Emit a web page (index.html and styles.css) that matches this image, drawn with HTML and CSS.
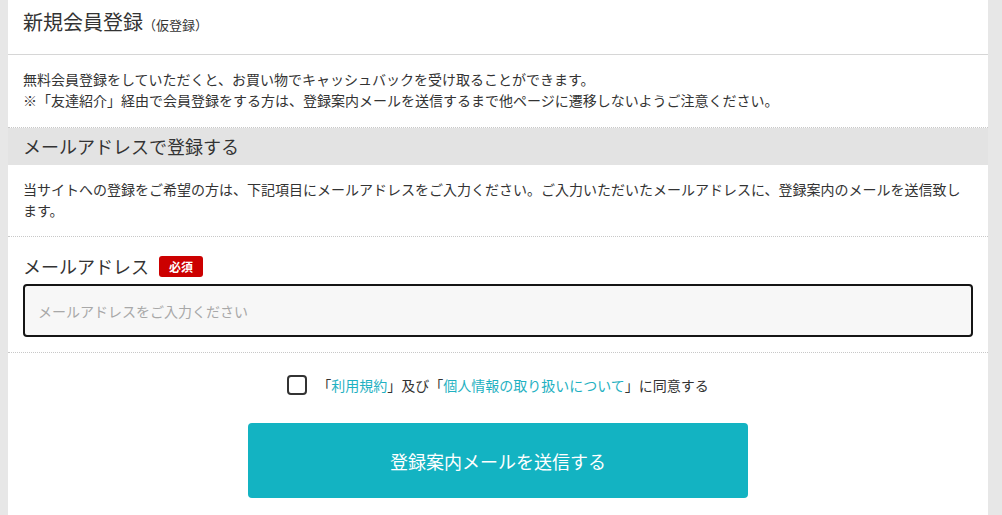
FILE: index.html
```html
<!DOCTYPE html>
<html lang="ja">
<head>
<meta charset="utf-8">
<title>新規会員登録</title>
<link rel="stylesheet" href="styles.css">
</head>
<body>
<main class="panel">
  <header class="page-head">
    <h1 class="page-title">新規会員登録<small class="page-sub">（仮登録）</small></h1>
  </header>
  <section class="intro">
    <p>無料会員登録をしていただくと、お買い物でキャッシュバックを受け取ることができます。</p>
    <p>※「友達紹介」経由で会員登録をする方は、登録案内メールを送信するまで他ページに遷移しないようご注意ください。</p>
  </section>
  <h2 class="band">メールアドレスで登録する</h2>
  <section class="desc">
    <p>当サイトへの登録をご希望の方は、下記項目にメールアドレスをご入力ください。ご入力いただいたメールアドレスに、登録案内のメールを送信致します。</p>
  </section>
  <section class="field">
    <div class="field-label">
      <span class="label-text">メールアドレス</span>
      <span class="badge">必須</span>
    </div>
    <input class="email" type="email" placeholder="メールアドレスをご入力ください">
  </section>
  <section class="agree">
    <label class="agree-row">
      <input type="checkbox" class="check">
      <span class="agree-text">「<a href="#" class="link">利用規約</a>」及び「<a href="#" class="link">個人情報の取り扱いについて</a>」に同意する</span>
    </label>
    <button class="submit" type="button">登録案内メールを送信する</button>
  </section>
</main>
</body>
</html>
```
FILE: styles.css
```css
* { box-sizing: border-box; }
html, body { margin: 0; padding: 0; }
body {
  background: #e7e7e7;
  font-family: "Noto Sans CJK JP", "Noto Sans", sans-serif;
  color: #333;
  padding: 0 14px 0 8px;
}
.panel {
  background: #fff;
  min-height: 515px;
}
p { margin: 0; }
.page-head {
  height: 55px;
  padding: 7px 15px 0;
  border-bottom: 1px solid #d6d6d6;
}
.page-title {
  margin: 0;
  font-size: 20px;
  line-height: 30px;
  height: 30px;
  font-weight: normal;
  color: #333;
}
.page-sub {
  font-size: 13px;
  line-height: 1;
}
.intro {
  padding: 14px 15px 16px;
  font-size: 14px;
  line-height: 21px;
  border-bottom: 1px dotted #c8c8c8;
}
.band {
  margin: 0;
  background: #e3e3e3;
  font-size: 18px;
  font-weight: normal;
  line-height: 37px;
  padding: 0 15px;
  color: #333;
}
.desc {
  padding: 14px 15px 15px;
  font-size: 14px;
  line-height: 21px;
  border-bottom: 1px dotted #c8c8c8;
}
.field {
  padding: 18px 15px 15px;
  border-bottom: 1px dotted #c8c8c8;
}
.field-label {
  display: flex;
  align-items: center;
  height: 22px;
  gap: 10px;
}
.label-text {
  font-size: 18px;
  line-height: 22px;
}
.badge {
  display: inline-flex;
  align-items: center;
  justify-content: center;
  width: 44px;
  height: 21px;
  background: #cc0000;
  color: #fff;
  font-size: 12px;
  font-weight: bold;
  border-radius: 3px;
}
.email {
  display: block;
  width: 100%;
  height: 53px;
  margin-top: 7px;
  border: 2px solid #151515;
  border-radius: 4px;
  background: #f7f7f7;
  padding: 0 13px;
  font-family: inherit;
  font-size: 14px;
  color: #333;
  outline: none;
}
.email::placeholder { color: #a8a8a8; }
.agree {
  padding-top: 22px;
  display: flex;
  flex-direction: column;
  align-items: center;
}
.agree-row {
  display: flex;
  align-items: center;
  gap: 10px;
  height: 20px;
  font-size: 14px;
}
.check {
  appearance: none;
  -webkit-appearance: none;
  margin: 0;
  width: 20px;
  height: 20px;
  border: 2px solid #333;
  border-radius: 4px;
  background: #fff;
}
.agree-text { color: #333; }
.link { color: #1fb1c2; text-decoration: none; }
.submit {
  margin-top: 28px;
  width: 500px;
  height: 75px;
  border: none;
  border-radius: 4px;
  background: #13b3c2;
  color: #fff;
  font-family: inherit;
  font-size: 18px;
  cursor: pointer;
}
```
